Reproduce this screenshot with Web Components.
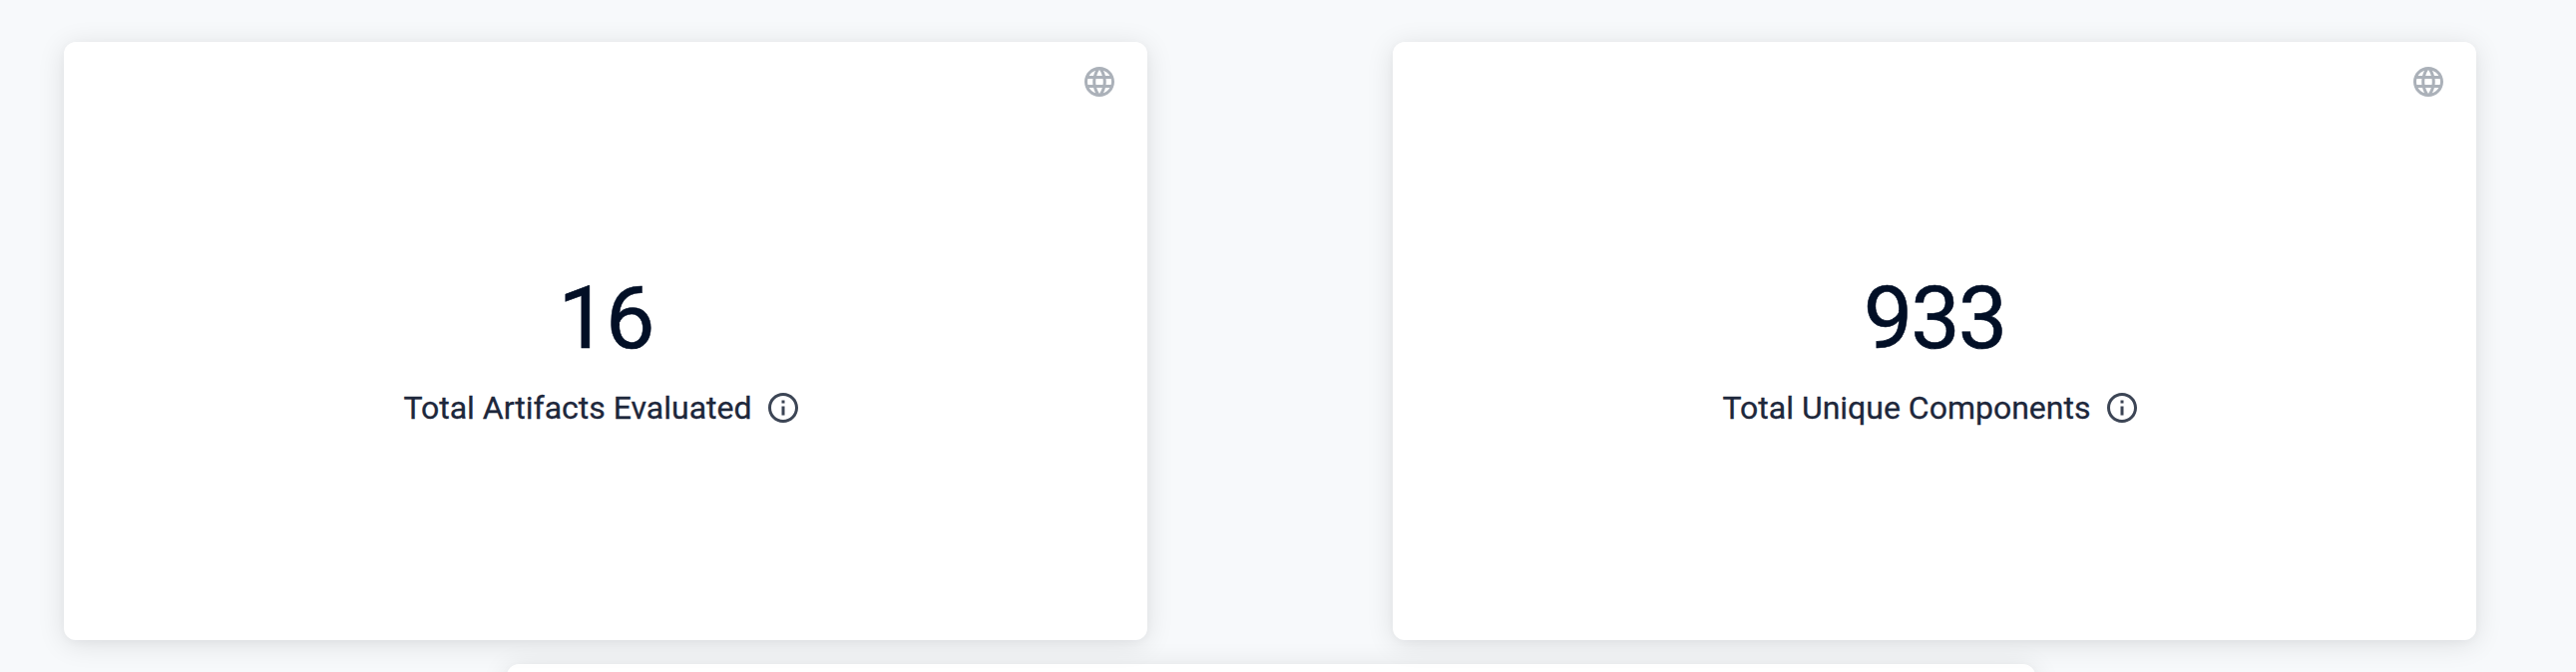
<!DOCTYPE html>
<html lang="en">
<head>
<meta charset="utf-8">
<title>Dashboard</title>
<style>
html, body { margin: 0; height: 100%; overflow: hidden; background: #f7f9fb; font-family: Roboto, "Liberation Sans", sans-serif; }
</style>
</head>
<body>
<metric-board>
  <metric-card value="16">Total Artifacts Evaluated</metric-card>
  <metric-card value="933">Total Unique Components</metric-card>
  <panel-card slot="below"></panel-card>
</metric-board>
<script>
const shadowed = (host, html) => { host.attachShadow({ mode: 'open' }).innerHTML = html; };
const cardShadow = 'background:#fff;border-radius:12px;box-shadow:0 2px 8px rgba(20,30,50,.03),0 4px 28px rgba(0,0,0,.11);';

class UiIcon extends HTMLElement {
  static paths = {
    globe: 'M11.99 2C6.47 2 2 6.48 2 12s4.47 10 9.99 10C17.52 22 22 17.52 22 12S17.52 2 11.99 2zm6.93 6h-2.95c-.32-1.25-.78-2.45-1.38-3.56 1.84.63 3.37 1.91 4.33 3.56zM12 4.04c.83 1.2 1.48 2.53 1.91 3.96h-3.82c.43-1.43 1.08-2.76 1.91-3.96zM4.26 14C4.1 13.36 4 12.69 4 12s.1-1.36.26-2h3.38c-.08.66-.14 1.32-.14 2s.06 1.34.14 2H4.26zm.82 2h2.95c.32 1.25.78 2.45 1.38 3.56-1.84-.63-3.37-1.9-4.33-3.56zm2.95-8H5.08c.96-1.66 2.49-2.93 4.33-3.56C8.81 5.55 8.35 6.75 8.03 8zM12 19.96c-.83-1.2-1.48-2.53-1.91-3.96h3.82c-.43 1.43-1.08 2.76-1.91 3.96zM14.34 14H9.66c-.09-.66-.16-1.32-.16-2s.07-1.35.16-2h4.68c.09.65.16 1.32.16 2s-.07 1.34-.16 2zm.25 5.56c.6-1.11 1.06-2.31 1.38-3.56h2.95c-.96 1.65-2.49 2.93-4.33 3.56zM16.36 14c.08-.66.14-1.32.14-2s-.06-1.34-.14-2h3.38c.16.64.26 1.31.26 2s-.1 1.36-.26 2h-3.38z',
    info: 'M11 7h2v2h-2zm0 4h2v6h-2zm1-9C6.48 2 2 6.48 2 12s4.48 10 10 10 10-4.48 10-10S17.52 2 12 2zm0 18c-4.41 0-8-3.59-8-8s3.59-8 8-8 8 3.59 8 8-3.59 8-8 8z'
  };
  connectedCallback() {
    shadowed(this, `<style>:host{display:block;width:36px;height:36px;flex:none}svg{display:block}</style>
      <svg width="36" height="36" viewBox="0 0 24 24" fill="currentColor"><path d="${UiIcon.paths[this.getAttribute('name')]}"/></svg>`);
  }
}

class MetricCard extends HTMLElement {
  connectedCallback() {
    shadowed(this, `<style>
      :host{display:flex;flex-direction:column;box-sizing:border-box;width:1086px;height:600px;padding-top:22px;${cardShadow}}
      .scope{align-self:flex-end;margin-right:30px;color:#abb1b9}
      .value{margin-top:167px;height:104px;line-height:104px;font-size:88px;letter-spacing:-2px;text-align:center;color:#020f26;-webkit-text-stroke:.6px currentColor}
      .label{display:flex;justify-content:center;align-items:center;gap:13.5px;height:36px;margin-top:20px;padding-right:6.5px;font-size:32px;color:#1d273b;white-space:nowrap}
      .label span{-webkit-text-stroke:.3px currentColor}
      .info{color:#3c4555}
    </style>
    <ui-icon class="scope" name="globe"></ui-icon>
    <div class="value">${this.getAttribute('value')}</div>
    <div class="label"><span><slot></slot></span><ui-icon class="info" name="info"></ui-icon></div>`);
  }
}

class PanelCard extends HTMLElement {
  connectedCallback() {
    shadowed(this, `<style>:host{display:block;width:1532px;height:600px;${cardShadow}}</style>`);
  }
}

class MetricBoard extends HTMLElement {
  connectedCallback() {
    shadowed(this, `<style>
      :host{display:block;height:674px;overflow:hidden}
      .row{display:flex;gap:246px;padding:42px 0 24px 64px}
      .below{margin-left:508px}
    </style>
    <div class="row"><slot></slot></div>
    <div class="below"><slot name="below"></slot></div>`);
  }
}
customElements.define('ui-icon', UiIcon);
customElements.define('metric-card', MetricCard);
customElements.define('panel-card', PanelCard);
customElements.define('metric-board', MetricBoard);
</script>
</body>
</html>
